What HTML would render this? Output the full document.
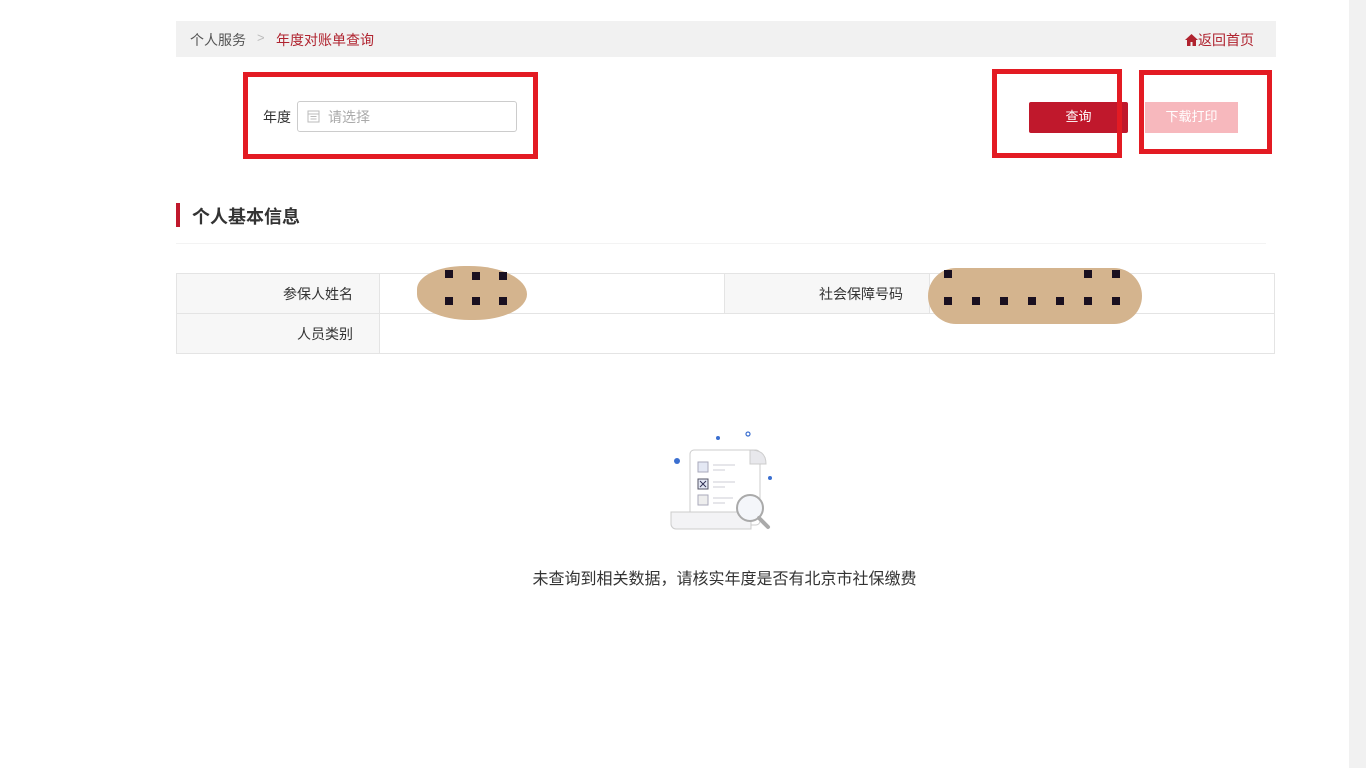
<!DOCTYPE html>
<html><head><meta charset="utf-8"><style>
*{margin:0;padding:0;box-sizing:border-box}
body{width:1366px;height:768px;background:#fff;position:relative;overflow:hidden;font-family:"Liberation Sans","Noto Sans CJK SC",sans-serif;color:#333}
.a{position:absolute}
.rb{position:absolute;border:5px solid #e31b23}
.sq{position:absolute;width:8px;height:8px;background:#1a1020}
</style></head><body>
<div class="a" style="left:1349px;top:0;width:17px;height:768px;background:#f1f1f1"></div>
<div class="a" style="left:176px;top:21px;width:1100px;height:36px;background:#f1f1f1"></div>
<div class="a" style="left:190px;top:30px;font-size:14px;color:#555">个人服务</div>
<div class="a" style="left:257px;top:30px;font-size:13px;color:#bbb">&gt;</div>
<div class="a" style="left:276px;top:30px;font-size:14px;color:#b0232f">年度对账单查询</div>
<div class="a" style="left:1185px;top:30px;font-size:14px;color:#b0232f"><svg width="13" height="12" viewBox="0 0 13 12" style="vertical-align:-1px"><path d="M6.5 0L0 6h2v6h3.5V8h2v4H11V6h2z" fill="#b0232f"/></svg>返回首页</div>

<div class="a" style="left:263px;top:107px;font-size:14px">年度</div>
<div class="a" style="left:297px;top:101px;width:220px;height:31px;border:1px solid #ccc;border-radius:3px"></div>
<svg class="a" style="left:307px;top:110px" width="13" height="13" viewBox="0 0 13 13"><rect x="1" y="1" width="11" height="11" fill="none" stroke="#bbb"/><path d="M1 4h11M3.5 6.5h6M3.5 9h6" stroke="#bbb"/></svg>
<div class="a" style="left:328px;top:107px;font-size:14px;color:#aaa">请选择</div>
<div class="a" style="left:1029px;top:102px;width:99px;height:31px;background:#c0182c;border-radius:2px;color:#fff;font-size:13px;text-align:center;line-height:30px">查询</div>
<div class="a" style="left:1145px;top:102px;width:93px;height:31px;background:#f7b8bd;color:#fff;font-size:13px;text-align:center;line-height:30px">下载打印</div>
<div class="rb" style="left:243px;top:72px;width:295px;height:87px"></div>
<div class="rb" style="left:992px;top:69px;width:130px;height:89px"></div>
<div class="rb" style="left:1139px;top:70px;width:133px;height:84px"></div>

<div class="a" style="left:176px;top:203px;width:4px;height:24px;background:#c0182c"></div>
<div class="a" style="left:192px;top:203px;font-size:18px;font-weight:bold;color:#333">个人基本信息</div>
<div class="a" style="left:176px;top:243px;width:1090px;height:1px;background:#f3f3f3"></div>

<div class="a" style="left:176px;top:273px;width:1099px;height:81px;border:1px solid #e4e4e4"></div>
<div class="a" style="left:177px;top:274px;width:203px;height:79px;background:#f7f7f7;border-right:1px solid #e4e4e4"></div>
<div class="a" style="left:724px;top:274px;width:206px;height:39px;background:#f7f7f7;border-left:1px solid #e4e4e4;border-right:1px solid #e4e4e4"></div>
<div class="a" style="left:177px;top:313px;width:1097px;height:1px;background:#e4e4e4"></div>
<div class="a" style="left:283px;top:284px;font-size:14px">参保人姓名</div>
<div class="a" style="left:297px;top:324px;font-size:14px">人员类别</div>
<div class="a" style="left:819px;top:284px;font-size:14px">社会保障号码</div>
<div class="a" style="left:417px;top:266px;width:110px;height:54px;background:#d4b48e;border-radius:45% 55% 50% 50%"></div>
<div class="sq" style="left:445px;top:270px"></div><div class="sq" style="left:472px;top:272px"></div><div class="sq" style="left:499px;top:272px"></div>
<div class="sq" style="left:445px;top:297px"></div><div class="sq" style="left:472px;top:297px"></div><div class="sq" style="left:499px;top:297px"></div>
<div class="a" style="left:928px;top:268px;width:214px;height:56px;background:#d4b48e;border-radius:30px"></div>
<div class="sq" style="left:944px;top:270px"></div><div class="sq" style="left:1084px;top:270px"></div><div class="sq" style="left:1112px;top:270px"></div>
<div class="sq" style="left:944px;top:297px"></div><div class="sq" style="left:972px;top:297px"></div><div class="sq" style="left:1000px;top:297px"></div><div class="sq" style="left:1028px;top:297px"></div><div class="sq" style="left:1056px;top:297px"></div><div class="sq" style="left:1084px;top:297px"></div><div class="sq" style="left:1112px;top:297px"></div>

<svg class="a" style="left:668px;top:425px" width="115" height="110" viewBox="0 0 115 110">
<circle cx="9" cy="36" r="3" fill="#3b6fd0"/><circle cx="50" cy="13" r="2" fill="#3b6fd0"/><circle cx="80" cy="9" r="2" fill="none" stroke="#3b6fd0" stroke-width="1.2"/><circle cx="102" cy="53" r="2" fill="#3b6fd0"/>
<rect x="22" y="25" width="70" height="75" rx="4" fill="#fff" stroke="#ccc"/>
<path d="M82 25c8 0 16 2 16 14H82z" fill="#e8e8ec" stroke="#ccc"/>
<rect x="30" y="37" width="10" height="10" fill="#e4e8f4" stroke="#aab"/><rect x="30" y="54" width="10" height="10" fill="#e4e8f4" stroke="#556"/><path d="M32 56l6 6M38 56l-6 6" stroke="#335" /><rect x="30" y="70" width="10" height="10" fill="#eee" stroke="#aab"/>
<path d="M45 40h22M45 45h12M45 57h22M45 62h12M45 73h20M45 78h12" stroke="#e6e6ea" stroke-width="2"/>
<path d="M3 87h80v17H8a5 5 0 0 1-5-5z" fill="#f3f3f5" stroke="#ccc"/>
<circle cx="82" cy="83" r="13" fill="#f4f6fa" stroke="#aaa" stroke-width="2"/><path d="M91 93l9 9" stroke="#aaa" stroke-width="4" stroke-linecap="round"/>
</svg>
<div class="a" style="left:0;width:1449px;top:565px;text-align:center;font-size:16px;color:#333">未查询到相关数据，请核实年度是否有北京市社保缴费</div>
</body></html>
